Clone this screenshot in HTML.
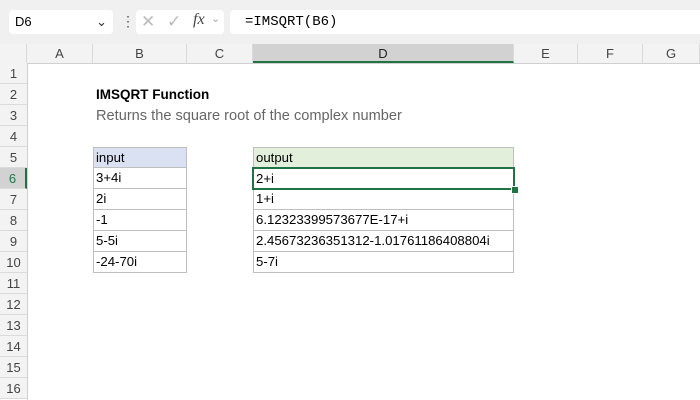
<!DOCTYPE html><html><head><style>
body{margin:0;width:700px;height:400px;overflow:hidden;background:#fff;font-family:"Liberation Sans",sans-serif;position:relative}
.a{position:absolute}
.rh{position:absolute;left:0;width:27px;height:21px;background:#f3f3f3;border-bottom:1px solid #dadada;box-sizing:border-box;font-size:13px;color:#444;text-align:center;line-height:21px}
.ch{position:absolute;top:44px;height:19px;background:#f3f3f3;border-right:1px solid #dadada;box-sizing:border-box;font-size:13px;color:#444;text-align:center;line-height:19px}
.c{position:absolute;height:21px;box-sizing:border-box;border:1px solid #bfbfbf;font-size:13.2px;line-height:20px;padding-left:2px;color:#000}
</style></head><body>
<div class="a" style="left:0;top:0;width:700px;height:44px;background:#f0f0f0"></div>
<div class="a" style="left:9px;top:10px;width:104px;height:24px;background:#fff;border-radius:4px;font-size:13px;line-height:24px;padding-left:6px;box-sizing:border-box">D6<span style="position:absolute;right:6px;top:0;color:#333">&#8964;</span></div>
<div class="a" style="left:121px;top:13px;font-size:14px;color:#555">&#8942;</div>
<div class="a" style="left:136px;top:10px;width:88px;height:24px;background:#fff;border-radius:4px"></div>
<div class="a" style="left:141px;top:12px;font-size:17px;color:#bbb">&#10005;</div>
<div class="a" style="left:167px;top:12px;font-size:17px;color:#bbb">&#10003;</div>
<div class="a" style="left:193px;top:11px;font-size:16px;font-style:italic;font-family:'Liberation Serif',serif;color:#444">fx</div>
<div class="a" style="left:211px;top:12px;font-size:11px;color:#aaa">&#8964;</div>
<div class="a" style="left:230px;top:10px;width:470px;height:24px;background:#fff;border-radius:4px 0 0 4px;font-family:'Liberation Mono',monospace;font-size:14px;line-height:24px;padding-left:15px;box-sizing:border-box">=IMSQRT(B6)</div>
<div class="a" style="left:0;top:44px;width:27px;height:19px;background:#f3f3f3;border-right:1px solid #dadada;box-sizing:border-box"></div>
<div class="ch" style="left:27px;width:66px">A</div>
<div class="ch" style="left:93px;width:94px">B</div>
<div class="ch" style="left:187px;width:66px">C</div>
<div class="ch" style="left:253px;width:261px;background:#d2d2d2;border-bottom:2px solid #217346;color:#222">D</div>
<div class="ch" style="left:514px;width:64px">E</div>
<div class="ch" style="left:578px;width:65px">F</div>
<div class="ch" style="left:643px;width:57px">G</div>
<div class="a" style="left:0;top:63px;width:700px;height:1px;background:#d0d0d0"></div>
<div class="a" style="left:27px;top:63px;width:1px;height:337px;background:#d0d0d0"></div>
<div class="rh" style="top:63px">1</div><div class="rh" style="top:84px">2</div><div class="rh" style="top:105px">3</div><div class="rh" style="top:126px">4</div><div class="rh" style="top:147px">5</div>
<div class="rh" style="top:168px;background:#d2d2d2;color:#217346;border-right:2px solid #217346">6</div>
<div class="rh" style="top:189px">7</div><div class="rh" style="top:210px">8</div><div class="rh" style="top:231px">9</div><div class="rh" style="top:252px">10</div><div class="rh" style="top:273px">11</div><div class="rh" style="top:294px">12</div><div class="rh" style="top:315px">13</div><div class="rh" style="top:336px">14</div><div class="rh" style="top:357px">15</div><div class="rh" style="top:378px">16</div>
<div class="a" style="left:96px;top:87px;font-size:13.5px;font-weight:bold">IMSQRT Function</div>
<div class="a" style="left:96px;top:108px;font-size:14.6px;color:#666">Returns the square root of the complex number</div>
<div class="c" style="left:93px;top:147px;width:94px;background:#d9e1f2">input</div>
<div class="c" style="left:93px;top:168px;width:94px;border-top:0;height:21px">3+4i</div>
<div class="c" style="left:93px;top:189px;width:94px;border-top:0">2i</div>
<div class="c" style="left:93px;top:210px;width:94px;border-top:0">-1</div>
<div class="c" style="left:93px;top:231px;width:94px;border-top:0">5-5i</div>
<div class="c" style="left:93px;top:252px;width:94px;border-top:0">-24-70i</div>
<div class="c" style="left:253px;top:147px;width:261px;background:#e2efda">output</div>
<div class="c" style="left:253px;top:189px;width:261px;border-top:0">1+i</div>
<div class="c" style="left:253px;top:210px;width:261px;border-top:0">6.12323399573677E-17+i</div>
<div class="c" style="left:253px;top:231px;width:261px;border-top:0">2.45673236351312-1.01761186408804i</div>
<div class="c" style="left:253px;top:252px;width:261px;border-top:0">5-7i</div>
<div class="c" style="left:252px;top:167px;width:263px;height:23px;border:2px solid #217346;line-height:19px;padding-left:2px">2+i</div>
<div class="a" style="left:511px;top:186px;width:6px;height:6px;background:#217346;border:1px solid #fff"></div>
</body></html>
